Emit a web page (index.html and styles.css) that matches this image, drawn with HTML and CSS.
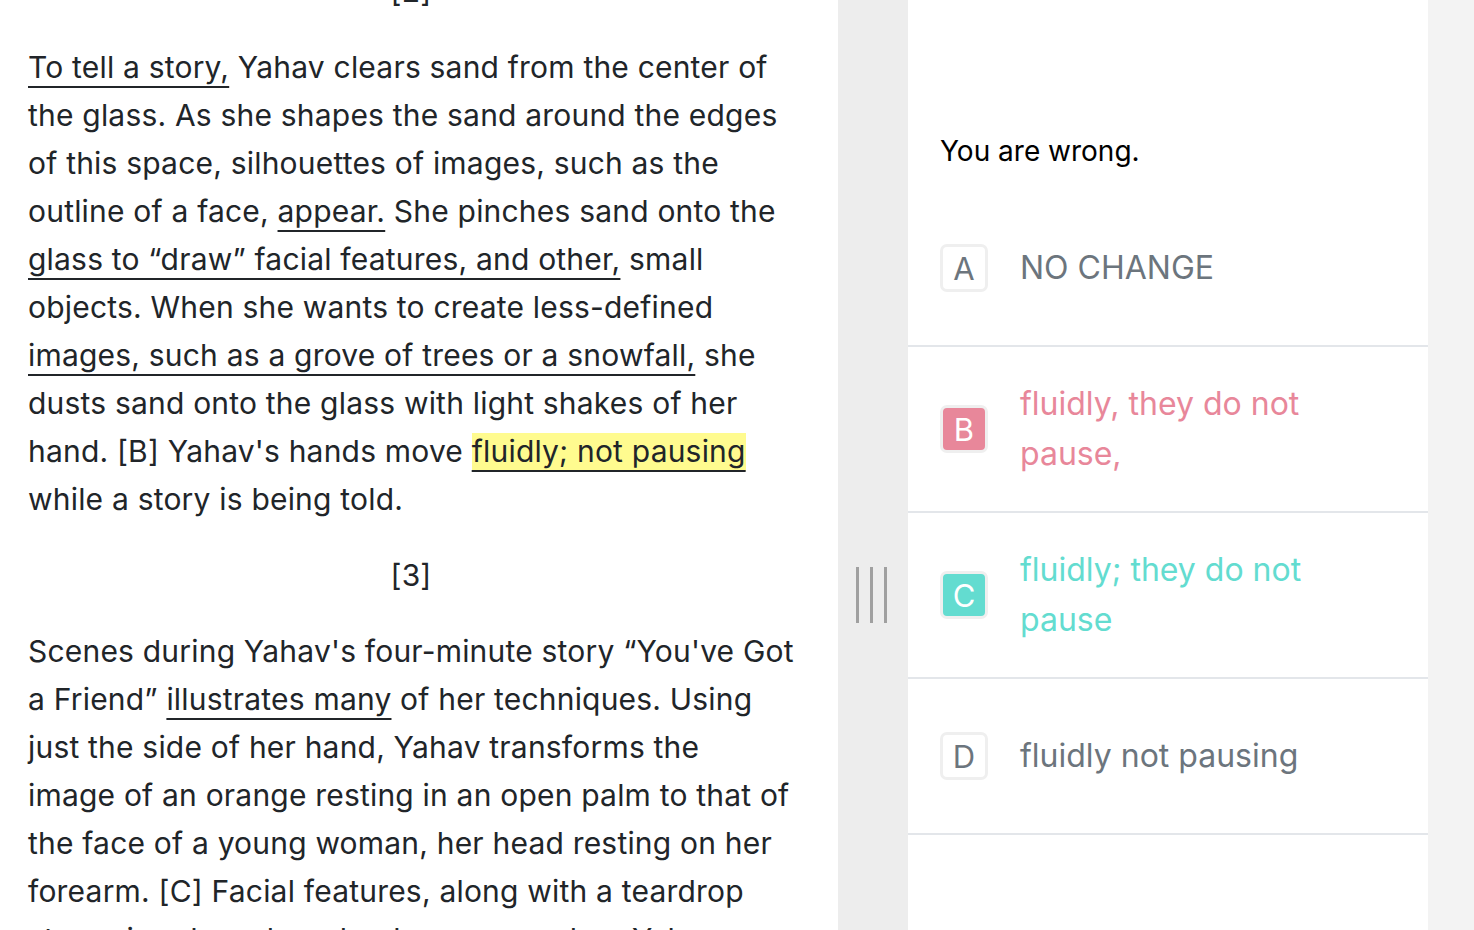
FILE: index.html
```html
<!DOCTYPE html>
<html>
<head>
<meta charset="utf-8">
<link rel="stylesheet" href="styles.css">
</head>
<body>
<div class="app">
  <section class="passage">
    <div class="passage-inner">
      <p class="marker">[2]</p>
      <p class="para"><span class="ul">To tell a story,</span> Yahav clears sand from the center of the glass. As she shapes the sand around the edges of this space, silhouettes of images, such as the outline of a face, <span class="ul">appear.</span> She pinches sand onto the <span class="ul">glass to “draw” facial features, and other,</span> small objects. When she wants to create less-defined <span class="ul">images, such as a grove of trees or a snowfall,</span> she dusts sand onto the glass with light shakes of her hand. [B] Yahav's hands move <span class="ul hl">fluidly; not pausing</span> while a story is being told.</p>
      <p class="marker">[3]</p>
      <p class="para">Scenes during Yahav's four-minute story “You've Got a Friend” <span class="ul">illustrates many</span> of her techniques. Using just the side of her hand, Yahav transforms the image of an orange resting in an open palm to that of the face of a young woman, her head resting on her forearm. [C] Facial features, along with a teardrop streaming down her cheek, emerge when Yahav pinches bits of sand onto the glass.</p>
    </div>
  </section>
  <div class="gutter">
    <div class="handle"><span></span><span></span><span></span></div>
  </div>
  <section class="question">
    <p class="feedback">You are wrong.</p>
    <ul class="options">
      <li class="option"><span class="letter">A</span><span class="text">NO CHANGE</span></li>
      <li class="option wrong"><span class="letter">B</span><span class="text">fluidly, they do not pause,</span></li>
      <li class="option right"><span class="letter">C</span><span class="text">fluidly; they do not pause</span></li>
      <li class="option"><span class="letter">D</span><span class="text">fluidly not pausing</span></li>
    </ul>
  </section>
  <div class="edge"></div>
</div>
</body>
</html>
```

FILE: styles.css
```css
* { box-sizing: border-box; }
html, body {
  margin: 0;
  padding: 0;
  height: 100%;
  overflow: hidden;
  background: #fff;
}
body {
  font-family: Inter, "Noto Sans", sans-serif;
  color: #212529;
}
.app {
  display: flex;
  height: 930px;
}
.passage {
  width: 838px;
  flex: none;
  overflow: hidden;
  background: #fff;
}
.passage-inner {
  padding: 0 44px 0 28px;
  margin-top: -33px;
}
.para {
  margin: 0;
  font-size: 30px;
  letter-spacing: 0.2px;
  line-height: 48px;
  color: #212529;
}
.marker {
  margin: 28px 0;
  text-align: center;
  font-size: 30px;
  letter-spacing: 0.2px;
  line-height: 48px;
}
.marker:first-child { margin-top: 0; }
.ul {
  text-decoration: underline;
  text-decoration-thickness: 2px;
  text-underline-offset: 8px;
}
.hl {
  background: #fffb8f;
  padding-bottom: 2px;
}
.gutter {
  width: 70px;
  flex: none;
  background: #ededed;
  display: flex;
  align-items: center;
  justify-content: center;
}
.handle {
  display: flex;
  gap: 11px;
  margin-top: 260px;
  margin-right: 3px;
}
.handle span {
  width: 3px;
  height: 56px;
  background: #a0a0a0;
}
.question {
  width: 520px;
  flex: none;
  background: #fff;
  padding-top: 131px;
}
.feedback {
  margin: 0 0 20px 32px;
  font-size: 28px;
  line-height: 40px;
  color: #000;
}
.options {
  list-style: none;
  margin: 0;
  padding: 0;
}
.option {
  display: flex;
  align-items: center;
  padding: 32px 32px;
  border-bottom: 2px solid #e3e6ea;
  color: #6c757d;
}
.letter {
  flex: none;
  width: 48px;
  height: 48px;
  margin: 21px 32px 21px 0;
  border: 3px solid #efefef;
  border-radius: 7px;
  display: flex;
  align-items: center;
  justify-content: center;
  font-size: 31px;
  color: #6c757d;
  background: #fff;
}
.text {
  font-size: 32px;
  line-height: 50px;
}
.wrong { color: #e8879a; }
.wrong .letter { background: #e8879a; color: #fff; }
.right { color: #63dcd0; }
.right .letter { background: #63dcd0; color: #fff; }
.edge {
  flex: 1;
  background: #f3f3f3;
}
```
